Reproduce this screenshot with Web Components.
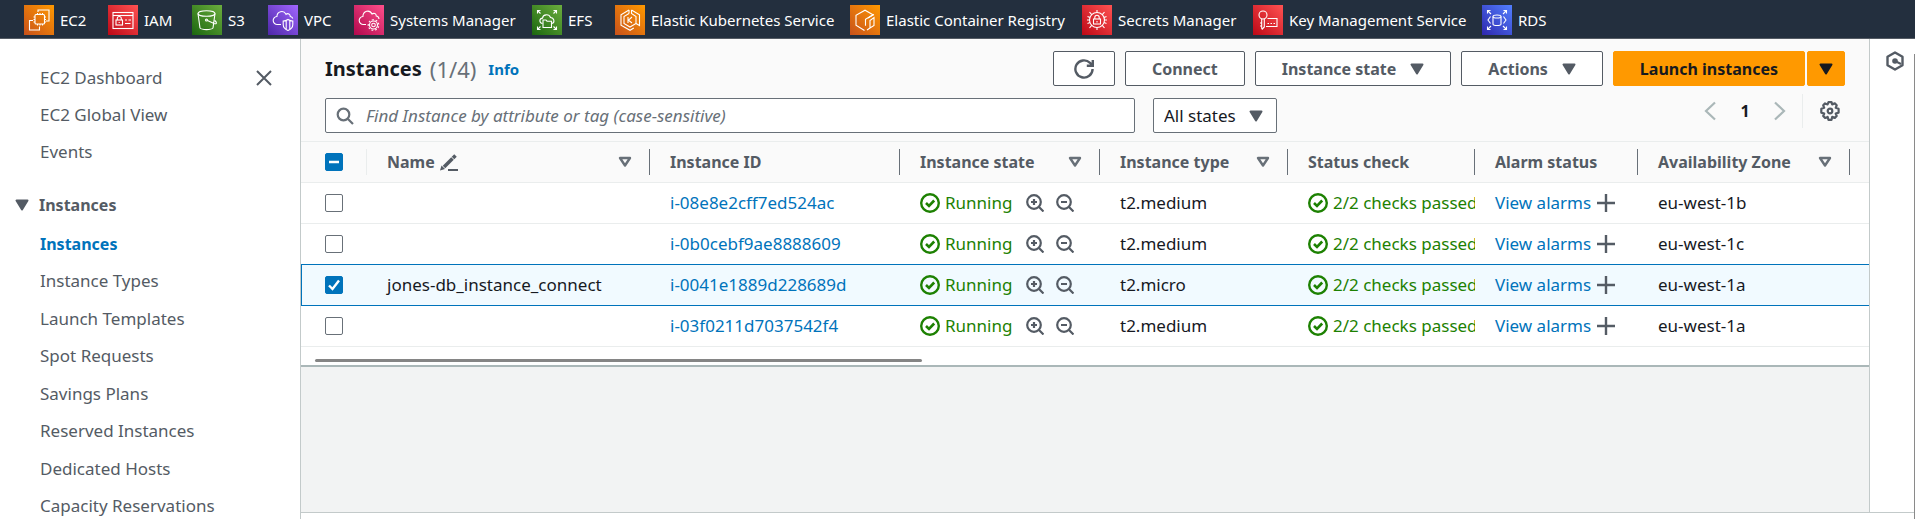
<!DOCTYPE html>
<html lang="en">
<head>
<meta charset="utf-8">
<title>Instances | EC2 Management Console</title>
<style>
  html, body { margin: 0; height: 100%; }
  body { font: 17px/22px "Noto Sans", "Open Sans", sans-serif; color: #16191f; background: #fff; overflow: hidden; }
</style>
</head>
<body>
<console-app></console-app>
<script>
const GLYPHS = {
  ec2: '<rect x="11" y="9.500" width="9.500" height="9.500" rx="1"/><path d="M13.500 9.500V8M16 9.500V8M18.500 9.500V8M11 12H9.500M11 14.500H9.500M11 17H9.500M20.500 12H22M20.500 14.500H22M20.500 17H22M13.500 19v1.500M16 19v1.500M18.500 19v1.500"/><path d="M14 7V5h11v11h-3M9 15.500H5.500V25H15.500v-3.500"/>',
  iam: '<rect x="5" y="7.500" width="20" height="16"/><path d="M5 10.500h20"/><rect x="8" y="15" width="6.500" height="5"/><path d="M9.300 15v-1.500a2 2 0 0 1 4 0V15M11.200 17v1M17 15h2M20.500 15H23M17 18.500h5.500"/>',
  s3: '<ellipse cx="14.500" cy="8.500" rx="8.500" ry="2.800"/><path d="M6 8.500l2 14.500c2 2.200 11 2.200 13 0l2-14.500M15.500 15.500l7 3.200c2.500.6 2.500-1.300.3-3.200"/><circle cx="14.500" cy="15" r="1"/>',
  vpc: '<path d="M13 19.500H9.500a4 4 0 0 1-.6-8C9 6.500 15.500 4.500 18 9.300c2-1.500 4.300-.2 4.300 2.200 1.200.3 2 .8 2.500 2"/><path d="M20 14.500c2 1.200 3.500 1.500 4.800 1.500v3.500c0 3-2 4.800-4.800 6-2.800-1.200-4.800-3-4.800-6V16c1.300 0 2.800-.3 4.800-1.500zM18.200 15.500v9M21.800 15.500v9"/>',
  ssm: '<path d="M12 19.500H9.500a4 4 0 0 1-.6-8C9 6 15.500 4 18 9c2-1.500 4.300-.2 4.300 2 1.500.2 2.500 1.200 2.700 3"/><circle cx="19.500" cy="20" r="1.800"/><circle cx="19.500" cy="20" r="4"/><path stroke-dasharray="1.800 1.800" d="M19.500 14.700a5.300 5.300 0 1 0 .01 0"/>',
  efs: '<path d="M10.500 18.500c-3.500-.5-3.500-5 0-5.400.5-4 6.500-4.500 8-.6 4 .5 4.500 5 1.500 6"/><path d="M11 15h3l1 1.200h4.500v6.300H11z"/><path d="M8.500 8.500L5.500 5.500M21.500 8.500l3-3M8.500 21.500l-3 3M21.500 21.500l3 3M5.500 8.500v-3h3M21.500 5.500h3v3M5.500 21.500v3h3M21.500 24.500h3v-3"/>',
  eks: '<path d="M14 5L6 9.800v10.500l9 5 3.800-2.300M16.500 5l8 4.800v10.700l-3.500-2"/><path d="M14 8.500L9 11.500v7l6 3.500 6-3.500v-7l-4.500-3V5M14 5v3.500"/><path d="M13 12v6M17 12l-3.500 3.200L17 18"/>',
  ecr: '<path d="M14.500 25.500L6 20.300V10.200l9-5 8 4.500-7.500 4.500v6.500"/><path d="M24 12.500v8l-4 2.500v-7.500zM20 23l-3 2M18 13l6-3.500"/>',
  sm: '<circle cx="15" cy="15" r="7.500"/><rect x="11.500" y="14" width="7" height="5"/><path d="M12.800 14v-1.500a2.200 2.200 0 0 1 4.400 0V14M15 16v1.500M15 7.500V5M15 25v-2.500M5 15h2.500M22.500 15H25M9.700 9.700L7.500 7M20.300 9.700L22.500 7M9.700 20.300L7.500 23M20.300 20.300L22.500 23M5.500 11.500l2.500 1M5.500 18.500l2.500-1M24.500 11.500l-2.500 1M24.500 18.500l-2.500-1"/>',
  kms: '<circle cx="10" cy="10" r="4"/><path d="M8.700 13.800v10M11.300 13.800V22l-2.500 2.500M8.700 18H7M8.700 21H7M14.500 13.500H24v8H13M14.500 18.500h1.500M17.500 18.500H19M20.500 18.500H22"/>',
  rds: '<ellipse cx="15" cy="11.500" rx="4" ry="1.500"/><path d="M11 11.500v7.500c0 2 8 2 8 0v-7.500M8.500 11.500L6 15l2.500 3.500M21.500 11.500L24 15l-2.500 3.500M9 9L5.500 5.500M21 9l3.500-3.500M9 21l-3.500 3.500M21 21l3.500 3.500M5.500 8.500v-3h3M21.500 5.500h3v3M5.500 21.500v3h3M21.500 24.500h3v-3"/>'
};
const ICONS = {
  close: ['0 0 16 16', '<path d="M1 1l14 14M15 1L1 15" stroke-width="2"/>'],
  down: ['0 0 14 12', '<path d="M1.500 1.500h11L7 10.500z" fill="currentColor" stroke-width="2" stroke-linejoin="round"/>'],
  filter: ['0 0 14 12', '<path d="M2 2h10L7 9.500z" stroke-width="2.400" stroke-linejoin="round"/>'],
  refresh: ['0 0 20 20', '<path d="M18.600 10a8.600 8.600 0 1 1-2.600-6.200L18 6M18.800 1v5.800h-6" stroke-width="2.400"/>'],
  search: ['0 0 18 18', '<circle cx="7.500" cy="7.500" r="5.800" stroke-width="2.200"/><path d="M12 12l5 5" stroke-width="2.200"/>'],
  prev: ['0 0 12 20', '<path d="M11 1.500L2 10l9 8.500" stroke-width="2.200"/>'],
  next: ['0 0 12 20', '<path d="M1 1.500L10 10l-9 8.500" stroke-width="2.200"/>'],
  gear: ['0 0 20 20', '<path d="M8.500 1.200h3l.7 2.200 2.600-1 1.900 1.900-1 2.500 2.900 1v3.800l-2.900.9 1 2.500-1.900 1.900-2.600-1-.7 2.900h-3l-.9-2.900-2.500 1-1.900-1.900 1-2.500-2.900-.9V7.800l2.900-1-1-2.500 1.900-1.900 2.500 1z" stroke-width="2.200" stroke-linejoin="round"/><circle cx="10" cy="10" r="2.300" stroke-width="2.200"/>'],
  pencil: ['0 0 18 18', '<path d="M4 14L15.500 2.500" stroke-width="3.600"/><path d="M0 17.500l1.500-5 3.500 3.500z" fill="currentColor" stroke="none"/><path d="M8 17h10" stroke-width="2"/><path d="M11 3.500l3.500 3.500" stroke="#fafafa" stroke-width="1"/>'],
  ok: ['0 0 20 20', '<circle cx="10" cy="10" r="8.800" stroke-width="2.400"/><path d="M6 10l3 3 5.200-5.500" stroke-width="2.600"/>'],
  zoomin: ['0 0 18 18', '<circle cx="8" cy="8" r="6.800" stroke-width="2.200"/><path d="M13 13l4.500 4.500M5 8h6M8 5v6" stroke-width="2.200"/>'],
  zoomout: ['0 0 18 18', '<circle cx="8" cy="8" r="6.800" stroke-width="2.200"/><path d="M13 13l4.500 4.500M5 8h6" stroke-width="2.200"/>'],
  plus: ['0 0 18 18', '<path d="M9 0v18M0 9h18" stroke-width="2.400"/>'],
  hex: ['0 0 18 20', '<path d="M9 1.500l7.500 4.300v8.400L9 18.500l-7.500-4.300V5.800z" stroke-width="2.400" stroke-linejoin="round"/><circle cx="9" cy="10" r="2.800" fill="currentColor" stroke="none"/><path d="M9 10l6 3" stroke-width="2"/>']
};
class Base extends HTMLElement {
  connectedCallback() {
    if (this.shadowRoot) return;
    const t = document.createElement('template');
    t.innerHTML = '<style>*{box-sizing:border-box}:host{box-sizing:border-box}' + this.css() + '</style>' + this.html();
    this.attachShadow({ mode: 'open' }).append(t.content.cloneNode(true));
    this.ready();
  }
  css() { return ''; }
  html() { return '<slot></slot>'; }
  ready() {}
}
const define = (n, c) => customElements.define(n, c);

define('ui-icon', class extends Base {
  css() { return ':host{display:inline-block;flex:none}svg{display:block;fill:none;stroke:currentColor}'; }
  html() {
    const [box, art] = ICONS[this.getAttribute('name')];
    const [, , w, h] = box.split(' ');
    return `<svg viewBox="${box}" width="${w}" height="${h}" aria-hidden="true">${art}</svg>`;
  }
});
define('service-link', class extends Base {
  css() { return `:host{display:block}
    a{display:flex;align-items:center;gap:6px;color:#fff;text-decoration:none;white-space:nowrap}
    span{flex:none;width:30px;height:30px;background:linear-gradient(45deg,var(--from),var(--to))}
    svg{display:block;fill:none;stroke:#fff;stroke-width:1.100}`; }
  html() { return `<a href="#"><span><svg viewBox="0 0 30 30" width="30" height="30" aria-hidden="true">${GLYPHS[this.getAttribute('service')]}</svg></span><slot></slot></a>`; }
});
define('service-bar', class extends Base {
  css() { return `:host{display:block;background:#232f3e;border-bottom:1px solid #545b64;font-size:15px;line-height:22px}
    nav{display:grid;grid-template-columns:84px 84px 76px 86px 178px 83px 235px 232px 171px 229px auto;justify-content:start;padding:5px 24px 3px}
    .o{--from:#c8511b;--to:#f90}.r{--from:#bd0816;--to:#ff5252}.g{--from:#1b660f;--to:#6cae3e}
    .v{--from:#4d27a8;--to:#a166ff}.p{--from:#b0084d;--to:#ff4f8b}.b{--from:#2e27ad;--to:#527fff}`; }
  html() {
    return '<nav aria-label="Favorites">' + [['ec2','o','EC2'],['iam','r','IAM'],['s3','g','S3'],['vpc','v','VPC'],['ssm','p','Systems Manager'],['efs','g','EFS'],['eks','o','Elastic Kubernetes Service'],['ecr','o','Elastic Container Registry'],['sm','r','Secrets Manager'],['kms','r','Key Management Service'],['rds','b','RDS']]
      .map(([s, c, t]) => `<service-link service="${s}" class="${c}">${t}</service-link>`).join('') + '</nav>';
  }
});
define('side-nav', class extends Base {
  css() { return `:host{display:grid;grid-template-columns:1fr auto;align-content:start;padding:28px 28px 0 40px;border-right:1px solid #c3caca;color:#545b64;overflow:hidden}
    ul{list-style:none;margin:0;padding:0;display:grid;gap:15px}
    .sub{grid-column:1/-1;margin-top:17px;min-height:284px;gap:0;align-content:space-between}
    a{color:inherit;text-decoration:none}
    a[aria-current]{color:#0073bb;font-weight:700;font-size:16px}
    button{border:0;background:none;padding:3px 0;color:inherit;align-self:start;line-height:0}
    h2{grid-column:1/-1;margin:31px 0 0 -25px;font-size:16px;line-height:22px;display:flex;gap:10px;align-items:center}`; }
  html() {
    const li = a => a.map(t => `<li><a href="#"${t === 'Instances' ? ' aria-current="page"' : ''}>${t}</a></li>`).join('');
    return `<ul>${li(['EC2 Dashboard', 'EC2 Global View', 'Events'])}</ul>
      <button aria-label="Close navigation"><ui-icon name="close"></ui-icon></button>
      <h2><ui-icon name="down"></ui-icon>Instances</h2>
      <ul class="sub">${li(['Instances', 'Instance Types', 'Launch Templates', 'Spot Requests', 'Savings Plans', 'Reserved Instances', 'Dedicated Hosts', 'Capacity Reservations'])}</ul>`;
  }
});
define('ui-button', class extends Base {
  css() { return `:host{display:block}
    button{display:flex;align-items:center;justify-content:center;gap:14px;height:35px;padding:0 26px;border:1px solid #545b64;border-radius:2px;background:#fff;color:#545b64;font:700 16px/22px "Noto Sans","Open Sans",sans-serif;white-space:nowrap}
    :host([primary]) button{background:#f90;border-color:#f90;color:#16191f}
    :host([narrow]) button{padding:0 11px}
    :host([wide]) button{padding:0 20px}`; }
  html() {
    const label = this.getAttribute('label');
    return `<button type="button"${label ? ` aria-label="${label}"` : ''}><slot></slot></button>`;
  }
});
define('list-header', class extends Base {
  css() { return `:host{display:grid;gap:12px;padding:12px 24px 8px;background:#fafafa;border-bottom:1px solid #eaeded}
    .row{display:flex;align-items:center}
    h1{margin:0 auto 0 0;font-size:20px;line-height:28px;display:flex;align-items:center;gap:8px}
    h1 span{font-weight:400;font-size:22px;color:#687078}
    h1 a{font-size:15px;color:#0073bb;text-decoration:none;margin-left:4px}
    .actions{display:flex;gap:10px}.split{display:flex;gap:2px}
    .search{flex:0 1 810px;display:flex;align-items:center;gap:12px;height:35px;padding:0 10px;border:1px solid #687078;border-radius:2px;background:#fff;color:#687078}
    input{flex:1;min-width:0;border:0;padding:0;outline:0;background:none;font:17px/22px "Noto Sans","Open Sans",sans-serif;color:#16191f}
    input::placeholder{color:#687078;font-style:italic;opacity:1}
    select{appearance:none;width:124px;height:35px;margin:0 auto 0 18px;padding:0 10px;border:1px solid #687078;border-radius:2px;font:17px/22px "Noto Sans","Open Sans",sans-serif;color:#16191f;
      background:#fff url("data:image/svg+xml,%3Csvg xmlns='http://www.w3.org/2000/svg' width='14' height='12'%3E%3Cpath d='M1.500 1.500h11L7 10.500z' fill='%23545b64' stroke='%23545b64' stroke-width='2' stroke-linejoin='round'/%3E%3C/svg%3E") no-repeat right 13px center}
    .pages{display:flex;align-items:center;height:35px;margin:-9px 5px 0 0;color:#545b64}
    .pages button{border:0;background:none;padding:0;line-height:0;color:inherit}
    .pages .arrow{color:#aab7b8}
    .pages b{width:58px;text-align:center;color:#16191f;font-size:16px}
    .gear{margin-left:16px;padding-left:17px!important;height:34px;border-left:1px solid #eaeded!important}`; }
  html() {
    return `<div class="row"><h1>Instances <span>(1/4)</span> <a href="#">Info</a></h1>
      <div class="actions">
        <ui-button wide label="Refresh"><ui-icon name="refresh"></ui-icon></ui-button>
        <ui-button>Connect</ui-button>
        <ui-button>Instance state <ui-icon name="down"></ui-icon></ui-button>
        <ui-button>Actions <ui-icon name="down"></ui-icon></ui-button>
        <div class="split"><ui-button primary>Launch instances</ui-button><ui-button primary narrow label="More launch options"><ui-icon name="down"></ui-icon></ui-button></div>
      </div></div>
      <div class="row"><label class="search"><ui-icon name="search"></ui-icon><input type="text" aria-label="Find instances" placeholder="Find Instance by attribute or tag (case-sensitive)"></label>
      <select aria-label="State filter"><option>All states</option></select>
      <div class="pages"><button class="arrow" aria-label="Previous page"><ui-icon name="prev"></ui-icon></button><b>1</b><button class="arrow" aria-label="Next page"><ui-icon name="next"></ui-icon></button>
      <button class="gear" aria-label="Preferences"><ui-icon name="gear"></ui-icon></button></div></div>`;
  }
});
define('status-label', class extends Base {
  css() { return ':host{display:inline-flex;align-items:center;gap:5px;color:#1d8102;white-space:nowrap}'; }
  html() { return '<ui-icon name="ok"></ui-icon><slot></slot>'; }
});
define('instances-table', class extends Base {
  css() { return `:host{display:block;background:#fff;border-bottom:2px solid #aab7b8}
    table{width:100%;table-layout:fixed;border-collapse:separate;border-spacing:0}
    th,td{height:41px;padding:0 0 0 20px;text-align:left;white-space:nowrap;overflow:hidden;border-bottom:1px solid #eaeded;line-height:22px}
    th:first-child,td:first-child{padding-left:24px}
    th{background:#fafafa;padding:7px 0 7px;color:#545b64;font-size:16px}
    th div{display:flex;align-items:center;gap:5px;height:26px;padding:0 17px 0 20px;border-right:1px solid #687078}
    th:first-child div{border-color:#eaeded;padding:0}
    th:last-child div{border:0}
    th .filter{margin-left:auto;color:#687078}
    td a{color:#0073bb;text-decoration:none}
    .cell{display:flex;align-items:center}
    .cell button{border:0;background:none;padding:0;line-height:0;color:#545b64;margin-left:6px}
    .cell .in{margin:0 12px 0 14px}.cell .out{margin:0}
    tr[aria-selected=true] td{background:#f1faff;border-color:#0073bb}
    tr[aria-selected=true] td:first-child{box-shadow:inset 1px 0 #0073bb}
    tr:has(+ tr[aria-selected=true]) td{border-color:#0073bb}
    input{appearance:none;display:block;width:18px;height:18px;margin:0;border:1px solid #687078;border-radius:2px;background:#fff center/16px no-repeat}
    input:checked,input:indeterminate{background-color:#0073bb;border-color:#0073bb}
    input:checked{background-image:url("data:image/svg+xml,%3Csvg xmlns='http://www.w3.org/2000/svg' viewBox='0 0 16 16'%3E%3Cpath d='M3 8.500l3.500 3.500L13 3.500' fill='none' stroke='white' stroke-width='2.400'/%3E%3C/svg%3E")}
    input:indeterminate{background-image:url("data:image/svg+xml,%3Csvg xmlns='http://www.w3.org/2000/svg' viewBox='0 0 16 16'%3E%3Cpath d='M3 8h10' stroke='white' stroke-width='2.400'/%3E%3C/svg%3E")}
    .track{padding:12px 14px 3px}.thumb{width:39.4%;height:3px;border-radius:2px;background:#858585}`; }
  html() {
    const cols = [66, 283, 250, 200, 188, 187, 163, 212];
    const head = [['Name', 1, 1], ['Instance ID'], ['Instance state', 1], ['Instance type', 1], ['Status check'], ['Alarm status'], ['Availability Zone', 1]];
    const rows = [['', 'i-08e8e2cff7ed524ac', 't2.medium', 'eu-west-1b'], ['', 'i-0b0cebf9ae8888609', 't2.medium', 'eu-west-1c'], ['jones-db_instance_connect', 'i-0041e1889d228689d', 't2.micro', 'eu-west-1a'], ['', 'i-03f0211d7037542f4', 't2.medium', 'eu-west-1a']];
    return `<table><colgroup>${cols.map(w => `<col style="width:${w}px">`).join('')}<col></colgroup>
      <thead><tr><th><div><input id="all" type="checkbox" aria-label="Select all instances"></div></th>
      ${head.map(([t, f, e]) => `<th scope="col"><div>${t}${e ? '<ui-icon name="pencil"></ui-icon>' : ''}${f ? '<ui-icon class="filter" name="filter"></ui-icon>' : ''}</div></th>`).join('')}<th><div></div></th></tr></thead>
      <tbody>${rows.map(([n, id, type, az]) => `<tr aria-selected="${!!n}"><td><input type="checkbox" aria-label="Select ${id}"${n ? ' checked' : ''}></td>
        <td>${n}</td><td><a href="#">${id}</a></td>
        <td><div class="cell"><status-label>Running</status-label><button class="in" aria-label="Filter in"><ui-icon name="zoomin"></ui-icon></button><button class="out" aria-label="Filter out"><ui-icon name="zoomout"></ui-icon></button></div></td>
        <td>${type}</td><td><div class="cell"><status-label>2/2 checks passed</status-label></div></td>
        <td><div class="cell"><a href="#">View alarms</a><button aria-label="Create alarm"><ui-icon name="plus"></ui-icon></button></div></td>
        <td>${az}</td><td></td></tr>`).join('')}</tbody></table>
      <div class="track"><div class="thumb"></div></div>`;
  }
  ready() { this.shadowRoot.getElementById('all').indeterminate = true; }
});
define('tool-rail', class extends Base {
  css() { return `:host{display:flex;justify-content:center;padding:12px 0 0 6px;border-left:1px solid #c3caca;background:#fff;color:#545b64}
    button{border:0;background:none;padding:0;line-height:0;color:inherit;align-self:flex-start}`; }
  html() { return '<button aria-label="Open tools"><ui-icon name="hex"></ui-icon></button>'; }
});
define('console-app', class extends Base {
  css() { return `:host{display:grid;grid-template-rows:auto 1fr;height:100vh}
    .body{display:grid;grid-template-columns:301px 1fr 1px;min-height:0}
    .content{display:grid;grid-template-columns:1fr 45px;grid-template-rows:1fr 7px;min-width:0}
    main{background:#f2f3f3;min-width:0}
    footer{grid-column:1/-1;background:#fff;border-top:1px solid #c3caca}
    .edge{margin-top:15px;background:#8a8a8a}`; }
  html() {
    return `<service-bar></service-bar><div class="body"><side-nav></side-nav>
      <div class="content"><main><list-header></list-header><instances-table></instances-table></main><tool-rail></tool-rail><footer></footer></div>
      <div class="edge"></div></div>`;
  }
});
</script>
</body>
</html>
